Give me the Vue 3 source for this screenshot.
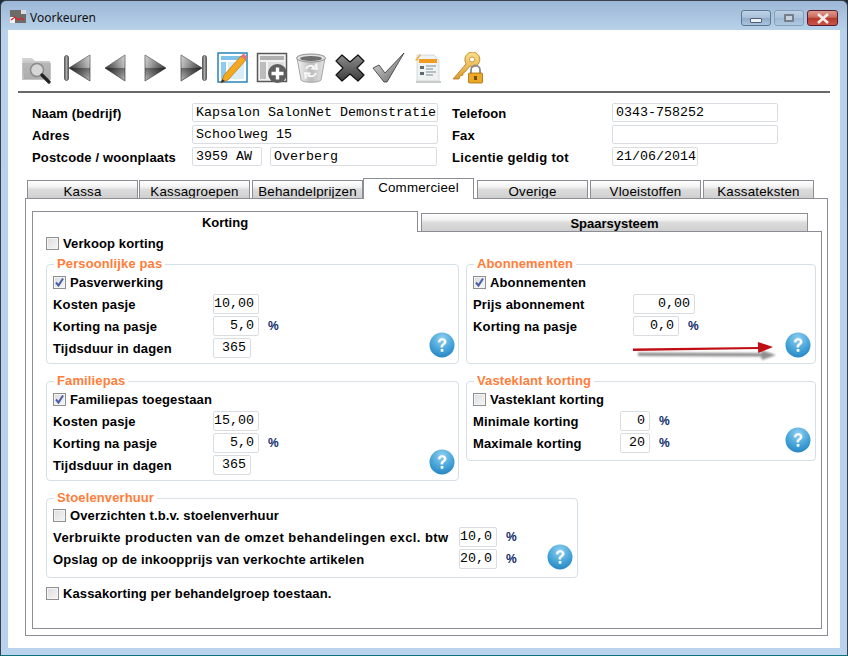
<script setup>
const topTabs = ['Kassa', 'Kassagroepen', 'Behandelprijzen', 'Commercieel', 'Overige', 'Vloeistoffen', 'Kassateksten']
</script>

<template>
  <div class="window">
    <svg class="defs" width="0" height="0" aria-hidden="true">
      <defs>
        <linearGradient id="triL" x1="0" y1="0" x2="1" y2="0"><stop offset="0" stop-color="#333"/><stop offset="1" stop-color="#bdbdbd"/></linearGradient>
        <linearGradient id="triR" x1="0" y1="0" x2="1" y2="0"><stop offset="0" stop-color="#bdbdbd"/><stop offset="1" stop-color="#333"/></linearGradient>
        <linearGradient id="triShade" x1="0" y1="0" x2="0" y2="1"><stop offset="0" stop-color="#fff" stop-opacity=".3"/><stop offset=".49" stop-color="#fff" stop-opacity="0"/><stop offset=".5" stop-color="#000" stop-opacity=".4"/><stop offset="1" stop-color="#000" stop-opacity="0"/></linearGradient>
        <linearGradient id="barG" x1="0" y1="0" x2="1" y2="0"><stop offset="0" stop-color="#555"/><stop offset=".5" stop-color="#aaa"/><stop offset="1" stop-color="#555"/></linearGradient>
        <linearGradient id="folderG" x1="0" y1="0" x2="0" y2="1"><stop offset="0" stop-color="#d6d6d6"/><stop offset="1" stop-color="#8e8e8e"/></linearGradient>
        <linearGradient id="binG" x1="0" y1="0" x2="1" y2="0"><stop offset="0" stop-color="#f4f4f4"/><stop offset=".5" stop-color="#bcbcbc"/><stop offset="1" stop-color="#e6e6e6"/></linearGradient>
        <linearGradient id="xG" x1="0" y1="0" x2="0" y2="1"><stop offset="0" stop-color="#8c8c8c"/><stop offset="1" stop-color="#3c3c3c"/></linearGradient>
        <linearGradient id="chkG" x1="0" y1="0" x2="1" y2="1"><stop offset="0" stop-color="#e4e4e4"/><stop offset="1" stop-color="#606060"/></linearGradient>
        <linearGradient id="keyG" x1="0" y1="0" x2="0" y2="1"><stop offset="0" stop-color="#fbe08a"/><stop offset="1" stop-color="#dc9d2c"/></linearGradient>
        <radialGradient id="helpG" cx=".5" cy=".25" r=".85"><stop offset="0" stop-color="#8fd0f0"/><stop offset=".6" stop-color="#3f9fd6"/><stop offset="1" stop-color="#1f7cb8"/></radialGradient>
        <filter id="soft" x="-10%" y="-60%" width="120%" height="220%"><feGaussianBlur stdDeviation="1.300"/></filter>
        <symbol id="help" viewBox="0 0 26 26">
          <circle cx="13" cy="13" r="12.500" fill="url(#helpG)"/>
          <path d="M9 10.200c0-2.500 1.800-4 4.200-4 2.400 0 4.100 1.400 4.100 3.500 0 1.700-.9 2.500-2 3.300-1 .7-1.300 1.100-1.300 2.300h-2.300c0-1.900.5-2.700 1.700-3.500 1-.7 1.500-1.100 1.500-2 0-.9-.7-1.500-1.700-1.500-1.100 0-1.800.7-1.800 1.900z" fill="#fff" stroke="#dfeaf2" stroke-width=".4"/>
          <rect x="11.700" y="17" width="2.700" height="2.700" rx=".5" fill="#fff"/>
        </symbol>
      </defs>
    </svg>

    <header class="titlebar">
      <svg class="app-icon" width="16" height="13" viewBox="0 0 16 13">
        <rect width="16" height="13" fill="#6d6a6a"/>
        <rect x="0" y="7" width="5" height="6" fill="#f2f2f2"/>
        <rect x="11" y="0" width="5" height="4" fill="#dcdcdc"/>
        <path d="M1 10l4-3 3 3 3-2 3 2" fill="none" stroke="#d22" stroke-width="1.200"/>
      </svg>
      <span class="title">Voorkeuren</span>
      <div class="caption">
        <button class="cap"><i class="min"></i></button>
        <button class="cap cap-max"><i class="max"></i></button>
        <button class="cap close">
          <svg width="14" height="11" viewBox="0 0 14 11"><path d="M2 1l10 9M12 1L2 10" stroke="#f4eaea" stroke-width="2.600"/></svg>
        </button>
      </div>
    </header>

    <main class="client">
      <nav class="toolbar">
        <span class="tool">
          <svg width="34" height="32" viewBox="0 0 34 32">
            <path d="M1 6h10l3 3h15v18H3z" fill="url(#folderG)"/>
            <rect x="1" y="11" width="29" height="17" fill="#b4b4b4" opacity=".8"/>
            <circle cx="16" cy="18" r="6.500" fill="#d6d6d6" stroke="#8a8a8a" stroke-width="1.500"/>
            <path d="M21 23l7 7" stroke="#222" stroke-width="3.200" stroke-linecap="round"/>
          </svg>
        </span>
        <span class="tool">
          <svg width="32" height="32" viewBox="0 0 32 32">
            <rect x="3.500" y="3.500" width="4" height="25" rx="2" fill="url(#barG)" stroke="#444" stroke-width=".7"/>
            <path d="M8 16L29 3v26z" fill="url(#triL)" stroke="#444" stroke-width=".7"/>
            <path d="M8 16L29 3v26z" fill="url(#triShade)"/>
          </svg>
        </span>
        <span class="tool">
          <svg width="32" height="32" viewBox="0 0 32 32">
            <path d="M5 16L25 3v26z" fill="url(#triL)" stroke="#444" stroke-width=".7"/>
            <path d="M5 16L25 3v26z" fill="url(#triShade)"/>
          </svg>
        </span>
        <span class="tool">
          <svg width="32" height="32" viewBox="0 0 32 32">
            <path d="M27 16L6 3v26z" fill="url(#triR)" stroke="#444" stroke-width=".7"/>
            <path d="M27 16L6 3v26z" fill="url(#triShade)"/>
          </svg>
        </span>
        <span class="tool">
          <svg width="32" height="32" viewBox="0 0 32 32">
            <path d="M24 16L3 3v26z" fill="url(#triR)" stroke="#444" stroke-width=".7"/>
            <path d="M24 16L3 3v26z" fill="url(#triShade)"/>
            <rect x="24.500" y="3.500" width="4" height="25" rx="2" fill="url(#barG)" stroke="#444" stroke-width=".7"/>
          </svg>
        </span>
        <span class="tool">
          <svg width="32" height="32" viewBox="0 0 32 32">
            <rect x="1" y="1" width="29" height="29" fill="#fff" stroke="#2484b8" stroke-width="1.500"/>
            <rect x="4" y="4" width="23" height="4" fill="#7fc3ea"/>
            <rect x="4" y="10" width="5" height="17" fill="#8fcbee"/>
            <rect x="11" y="10" width="16" height="17" fill="#d9edf9"/>
            <path d="M4 31l3-8L24 4l5 4L11 28z" fill="#f4a81e" stroke="#a8650c" stroke-width=".6"/>
            <path d="M24 4l2.500-2.500 4 3.500-2 3z" fill="#ea6f7c"/>
            <path d="M4 31l1-4 3 2z" fill="#333"/>
          </svg>
        </span>
        <span class="tool">
          <svg width="32" height="32" viewBox="0 0 32 32">
            <rect x="1.500" y="1.500" width="29" height="28" fill="#f2f2f2" stroke="#585858" stroke-width="1.500"/>
            <rect x="4" y="4" width="24" height="4" fill="#b0b0b0"/>
            <rect x="4" y="10" width="6" height="17" fill="#bcbcbc"/>
            <rect x="12" y="10" width="16" height="8" fill="#dedede"/>
            <circle cx="21.500" cy="21.500" r="9.500" fill="#5e5e5e"/>
            <path d="M21.500 15.500v12M15.500 21.500h12" stroke="#fff" stroke-width="3.400"/>
          </svg>
        </span>
        <span class="tool">
          <svg width="32" height="32" viewBox="0 0 32 32">
            <path d="M2 6l4 22c2 3 18 3 20 0l4-22z" fill="url(#binG)" stroke="#a4a4a4"/>
            <ellipse cx="16" cy="6" rx="14.500" ry="4" fill="#e2e2e2" stroke="#8e8e8e"/>
            <ellipse cx="16" cy="6.500" rx="11" ry="2.500" fill="#6e6e6e"/>
            <path d="M11 17a5 5 0 0 1 8-2l-1.500 1.500L22 17l-.5-4.500-1.500 1.500M21 21a5 5 0 0 1-8 2l1.500-1.500L10 21l.5 4.500L12 24" fill="none" stroke="#f8f8f8" stroke-width="1.800"/>
          </svg>
        </span>
        <span class="tool">
          <svg width="32" height="32" viewBox="0 0 32 32">
            <path d="M8 3l8 7 8-7 6 6-7 7 7 7-6 6-8-7-8 7-6-6 7-7-7-7z" fill="url(#xG)" stroke="#111" stroke-width="1.200" stroke-linejoin="round"/>
          </svg>
        </span>
        <span class="tool">
          <svg width="34" height="32" viewBox="0 0 34 32">
            <path d="M1 16l6-3 6 8L32 1 15 30h-3z" fill="url(#chkG)" stroke="#333" stroke-width=".8" stroke-linejoin="round"/>
          </svg>
        </span>
        <span class="tool">
          <svg width="32" height="32" viewBox="0 0 32 32">
            <path d="M5 3h17l5 5v21H5z" fill="#eef2f3" stroke="#c8cccc" stroke-width=".7"/>
            <rect x="7" y="7" width="18" height="4" fill="#f29b22"/>
            <rect x="8" y="14" width="4" height="3" fill="#5e6a70"/>
            <rect x="8" y="20" width="4" height="3" fill="#5e6a70"/>
            <path d="M14 14h10M14 17h7M14 20h10M14 23h7" stroke="#7f8b90"/>
            <path d="M3 8l5-6 1 1-4 6z" fill="#efb25c"/>
            <rect x="4" y="29" width="25" height="2" fill="#c8cccc"/>
          </svg>
        </span>
        <span class="tool">
          <svg width="32" height="32" viewBox="0 0 32 32">
            <path d="M2 27L15 12l-1-3a7.500 7.500 0 1 1 8 6l-3-1-5 6-2 1v2l-3 1-1 3H4z" fill="url(#keyG)" stroke="#b57a1c" stroke-width=".8"/>
            <circle cx="21" cy="7.500" r="2.500" fill="#fff" stroke="#b57a1c" stroke-width=".7"/>
            <path d="M20 21v-3a4.500 4.500 0 0 1 9 0v3" fill="none" stroke="#8a8a8a" stroke-width="1.800"/>
            <rect x="17.500" y="21" width="14" height="10" rx="1" fill="#eca926" stroke="#a36b10" stroke-width=".8"/>
            <rect x="23" y="24" width="3" height="4" fill="#7b4d08"/>
          </svg>
        </span>
      </nav>
      <hr class="rule" />

      <section class="details">
        <label>Naam (bedrijf)</label>
        <div class="field wide">Kapsalon SalonNet Demonstratie</div>
        <label>Telefoon</label>
        <div class="field phone">0343-758252</div>

        <label>Adres</label>
        <div class="field wide">Schoolweg 15</div>
        <label>Fax</label>
        <div class="field phone"></div>

        <label>Postcode / woonplaats</label>
        <div class="pair">
          <div class="field zip">3959 AW</div>
          <div class="field city">Overberg</div>
        </div>
        <label class="licentie">Licentie geldig tot</label>
        <div class="field date">21/06/2014</div>
      </section>

      <div class="tabs-top">
        <span v-for="t in topTabs" :key="t" class="tab" :class="[{ active: t === 'Commercieel' }, 'tab-' + t.toLowerCase()]">{{ t }}</span>
      </div>

      <div class="outer-panel">
        <div class="tabs-inner">
          <span class="subtab active">Korting</span>
          <span class="subtab">Spaarsysteem</span>
        </div>

        <div class="inner-panel">
          <div class="check-line top-check"><i class="box"></i>Verkoop korting</div>

          <div class="columns">
            <section class="group g-pas">
              <span class="legend">Persoonlijke pas</span>
              <div class="check-line"><i class="box on"><svg width="11" height="11" viewBox="0 0 11 11"><path d="M2 5.500l2.500 3L9 1.500" fill="none" stroke="#4a5ea8" stroke-width="2"/></svg></i>Pasverwerking</div>
              <div class="row"><span class="lab">Kosten pasje</span><div class="field num w46">10,00</div></div>
              <div class="row"><span class="lab">Korting na pasje</span><div class="field num w46">5,0</div><span class="pct">%</span></div>
              <div class="row"><span class="lab">Tijdsduur in dagen</span><div class="field num w38">365</div></div>
              <svg class="help"><use href="#help"/></svg>
            </section>

            <section class="group g-abo">
              <span class="legend">Abonnementen</span>
              <div class="check-line"><i class="box on"><svg width="11" height="11" viewBox="0 0 11 11"><path d="M2 5.500l2.500 3L9 1.500" fill="none" stroke="#4a5ea8" stroke-width="2"/></svg></i>Abonnementen</div>
              <div class="row"><span class="lab">Prijs abonnement</span><div class="field num w62">0,00</div></div>
              <div class="row"><span class="lab">Korting na pasje</span><div class="field num w46">0,0</div><span class="pct">%</span></div>
              <svg class="arrow" width="152" height="26" viewBox="0 0 152 26">
                <path d="M6 13.500L130 14l-1-3 15 5-14 5-1-3.500L6 17z" fill="#444" opacity=".6" filter="url(#soft)"/>
                <path d="M1 9.500L126 8l-.1-5L141 8 126.200 14l-.1-4L1 12z" fill="#c00f14"/>
              </svg>
              <svg class="help"><use href="#help"/></svg>
            </section>

            <section class="group g-fam">
              <span class="legend">Familiepas</span>
              <div class="check-line"><i class="box on"><svg width="11" height="11" viewBox="0 0 11 11"><path d="M2 5.500l2.500 3L9 1.500" fill="none" stroke="#4a5ea8" stroke-width="2"/></svg></i>Familiepas toegestaan</div>
              <div class="row"><span class="lab">Kosten pasje</span><div class="field num w46">15,00</div></div>
              <div class="row"><span class="lab">Korting na pasje</span><div class="field num w46">5,0</div><span class="pct">%</span></div>
              <div class="row"><span class="lab">Tijdsduur in dagen</span><div class="field num w38">365</div></div>
              <svg class="help"><use href="#help"/></svg>
            </section>

            <section class="group g-vast">
              <span class="legend">Vasteklant korting</span>
              <div class="check-line"><i class="box"></i>Vasteklant korting</div>
              <div class="row"><span class="lab short">Minimale korting</span><div class="field num w30">0</div><span class="pct">%</span></div>
              <div class="row"><span class="lab short">Maximale korting</span><div class="field num w30">20</div><span class="pct">%</span></div>
              <svg class="help"><use href="#help"/></svg>
            </section>
          </div>

          <section class="group g-stoel">
            <span class="legend">Stoelenverhuur</span>
            <div class="check-line"><i class="box"></i>Overzichten t.b.v. stoelenverhuur</div>
            <div class="row"><span class="lab long spaced">Verbruikte producten van de omzet behandelingen excl. btw</span><div class="field num w38">10,0</div><span class="pct">%</span></div>
            <div class="row"><span class="lab long">Opslag op de inkoopprijs van verkochte artikelen</span><div class="field num w38">20,0</div><span class="pct">%</span></div>
            <svg class="help"><use href="#help"/></svg>
          </section>

          <div class="check-line bottom-check"><i class="box"></i>Kassakorting per behandelgroep toestaan.</div>
        </div>
      </div>
    </main>
  </div>
</template>

<style>
html, body { margin: 0; padding: 0; background: #1d2a36; }
</style>

<style scoped>
.window {
  width: 848px;
  height: 656px;
  box-sizing: border-box;
  display: flex;
  flex-direction: column;
  overflow: hidden;
  border: 1px solid #39424c;
  border-bottom-color: #0e6f7c;
  border-radius: 6px 6px 0 0;
  background: linear-gradient(180deg, #9cb7d5 0, #b9d2eb 30px, #b9d3ec 100%);
  font-family: "Liberation Sans", Arial, sans-serif;
  color: #000;
}
.defs { position: absolute; }

.titlebar {
  height: 29px;
  flex: none;
  display: flex;
  align-items: center;
  padding: 0 9px 0 9px;
}
.app-icon { margin: 2px 4px 0 0; }
.title {
  font: 12px "Noto Sans", "Open Sans", sans-serif;
  color: #111;
  margin-top: 3px;
}
.caption { margin-left: auto; display: flex; gap: 3px; align-self: flex-start; margin-top: 9px; }
.cap {
  width: 30px;
  height: 16px;
  padding: 0;
  display: flex;
  align-items: center;
  justify-content: center;
  border: 1px solid #5f7891;
  border-radius: 3px;
  background: linear-gradient(180deg, #c0d3e6 0, #a6bfd8 50%, #8fabc8 52%, #a9c4df 100%);
}
.cap-max {
  border-color: #85a0bb;
  background: linear-gradient(180deg, #bdd0e4 0, #abc3dc 50%, #9fb9d4 52%, #b0c9e2 100%);
}
.cap i { display: block; }
.min { width: 10px; height: 3px; margin-top: 4px; background: #eef2f6; border: 1px solid #4f5e6e; border-radius: 1px; }
.max { box-sizing: content-box; width: 6px; height: 4px; background: #c9d3de; border: 2px solid #747f8a; border-radius: 1px; }
.cap.close {
  width: 31px;
  border-color: #5a1b2c;
  background: linear-gradient(180deg, #dd9a8e 0, #c96a5c 45%, #b63a2c 52%, #c9554a 100%);
}

.client {
  flex: 1;
  margin: 0 7px 7px;
  background: #fff;
  display: flex;
  flex-direction: column;
  padding: 0 10px;
  min-height: 0;
}

.toolbar { display: flex; padding-top: 22px; height: 32px; }
.tool { width: 39px; height: 32px; display: flex; justify-content: center; flex: none; }
.rule { height: 2px; margin: 7px 0 0; border: 0; background: #686868; }

.details {
  display: grid;
  grid-template-columns: 160px 246px 174px auto;
  row-gap: 3px;
  align-items: center;
  padding: 10px 0 0 14px;
}
.details label { font-weight: 700; font-size: 13px; height: 19px; line-height: 21px; letter-spacing: .15px; }
.details label:nth-of-type(even) { margin-left: 14px; }
.details label.licentie { letter-spacing: .3px; }
.details .field.wide { width: 246px; }
.phone { width: 166px; }
.date { width: 86px; }
.pair { display: flex; gap: 8px; }
.zip { width: 70px; }
.city { width: 167px; }

.field {
  box-sizing: border-box;
  height: 19px;
  border: 1px solid #d9dde2;
  border-radius: 2px;
  background: #fff;
  padding: 0 3px;
  font: 13.33px/17px "Liberation Mono", monospace;
  white-space: nowrap;
  overflow: hidden;
}
.field.num { text-align: right; height: 20px; line-height: 18px; padding: 0 4px 0 0; flex: none; letter-spacing: 0; }
.w30 { width: 30px; }
.w38 { width: 38px; }
.w46 { width: 46px; }
.w62 { width: 62px; }

.tabs-top {
  display: flex;
  height: 19px;
  margin: 13px 0 0 9px;
  position: relative;
  z-index: 1;
  align-items: flex-end;
}
.tab {
  box-sizing: border-box;
  width: 111px;
  height: 18px;
  margin-right: 2px;
  flex: none;
  text-align: center;
  font-size: 13.33px;
  line-height: 21px;
  letter-spacing: .2px;
  border: 1px solid #8d8d96;
  border-bottom: 0;
  background: linear-gradient(180deg, #fff 0, #f2f2f2 35%, #dcdcdc 50%, #cfcfcf 100%);
  overflow: hidden;
  white-space: nowrap;
}
.tab-kassa { margin-right: 1px; }
.tab-behandelprijzen { margin-right: 0; }
.tab.active {
  height: 21px;
  line-height: 18px;
  background: #fff;
  margin-right: 3px;
  position: relative;
  top: 1px;
}

.outer-panel {
  box-sizing: border-box;
  width: 803px;
  height: 438px;
  margin: 0 0 0 7px;
  border: 1px solid #8d8d96;
  padding: 11px 5px 6px 6px;
  display: flex;
  flex-direction: column;
  background: #fff;
}
.tabs-inner { display: flex; height: 21px; align-items: flex-end; flex: none; position: relative; z-index: 1; }
.subtab {
  box-sizing: border-box;
  width: 387px;
  height: 18px;
  margin-left: 3px;
  text-align: center;
  font-weight: 700;
  font-size: 13px;
  line-height: 20px;
  border: 1px solid #8d8d96;
  border-bottom: 0;
  background: linear-gradient(180deg, #fff 0, #f2f2f2 35%, #dcdcdc 50%, #cfcfcf 100%);
}
.subtab.active {
  width: 386px;
  height: 21px;
  margin: 0 0 -1px 0;
  line-height: 21px;
  background: #fff;
}
.inner-panel {
  flex: 1;
  box-sizing: border-box;
  border: 1px solid #8d8d96;
  padding: 0 4px 0 13px;
  background: #fff;
  min-height: 0;
}

.check-line {
  display: flex;
  align-items: center;
  gap: 4px;
  height: 22px;
  font-weight: 700;
  font-size: 13px;
  letter-spacing: .12px;
}
.top-check { margin-top: 0; }
.box {
  box-sizing: border-box;
  width: 13px;
  height: 13px;
  flex: none;
  display: flex;
  align-items: center;
  justify-content: center;
  border: 1px solid #8e8f8f;
  background: linear-gradient(135deg, #dcdcdc 0, #f6f6f6 100%);
  box-shadow: inset 0 0 0 1px #f4f4f4;
}
.box svg { display: block; }

.columns {
  display: grid;
  grid-template-columns: 413px 350px;
  column-gap: 7px;
  row-gap: 17px;
  align-items: start;
  margin-top: 10px;
}
.group {
  position: relative;
  box-sizing: border-box;
  border: 1px solid #d5dfe8;
  border-radius: 4px;
  padding: 6px 6px 0 6px;
  background: #fff;
}
.g-pas, .g-abo, .g-fam { height: 100px; }
.g-vast { height: 80px; }
.g-stoel { width: 532px; height: 80px; margin-top: 17px; padding-top: 5px; }
.legend {
  position: absolute;
  top: -9px;
  left: 7px;
  padding: 0 3px;
  background: #fff;
  color: #ff7d3a;
  font-weight: 700;
  font-size: 13px;
  line-height: 16px;
  letter-spacing: .12px;
}
.row {
  display: flex;
  align-items: center;
  height: 22px;
  font-weight: 700;
  font-size: 13px;
  letter-spacing: .15px;
}
.group > .check-line { height: 22px; }
.lab { width: 160px; flex: none; }
.lab.short { width: 147px; }
.lab.long { width: 406px; }
.lab.spaced { letter-spacing: .44px; }
.pct { margin-left: 9px; font-size: 12px; color: #0c2a6a; }
.help { position: absolute; right: 3px; bottom: 5px; width: 26px; height: 26px; }
.g-abo .help { bottom: 5px; right: 4px; }
.g-vast .help { bottom: 7px; right: 4px; }
.g-stoel .help { bottom: 7px; right: 4px; }
.arrow { position: absolute; left: 165px; top: 74px; }

.bottom-check { margin-top: 4px; }
</style>
